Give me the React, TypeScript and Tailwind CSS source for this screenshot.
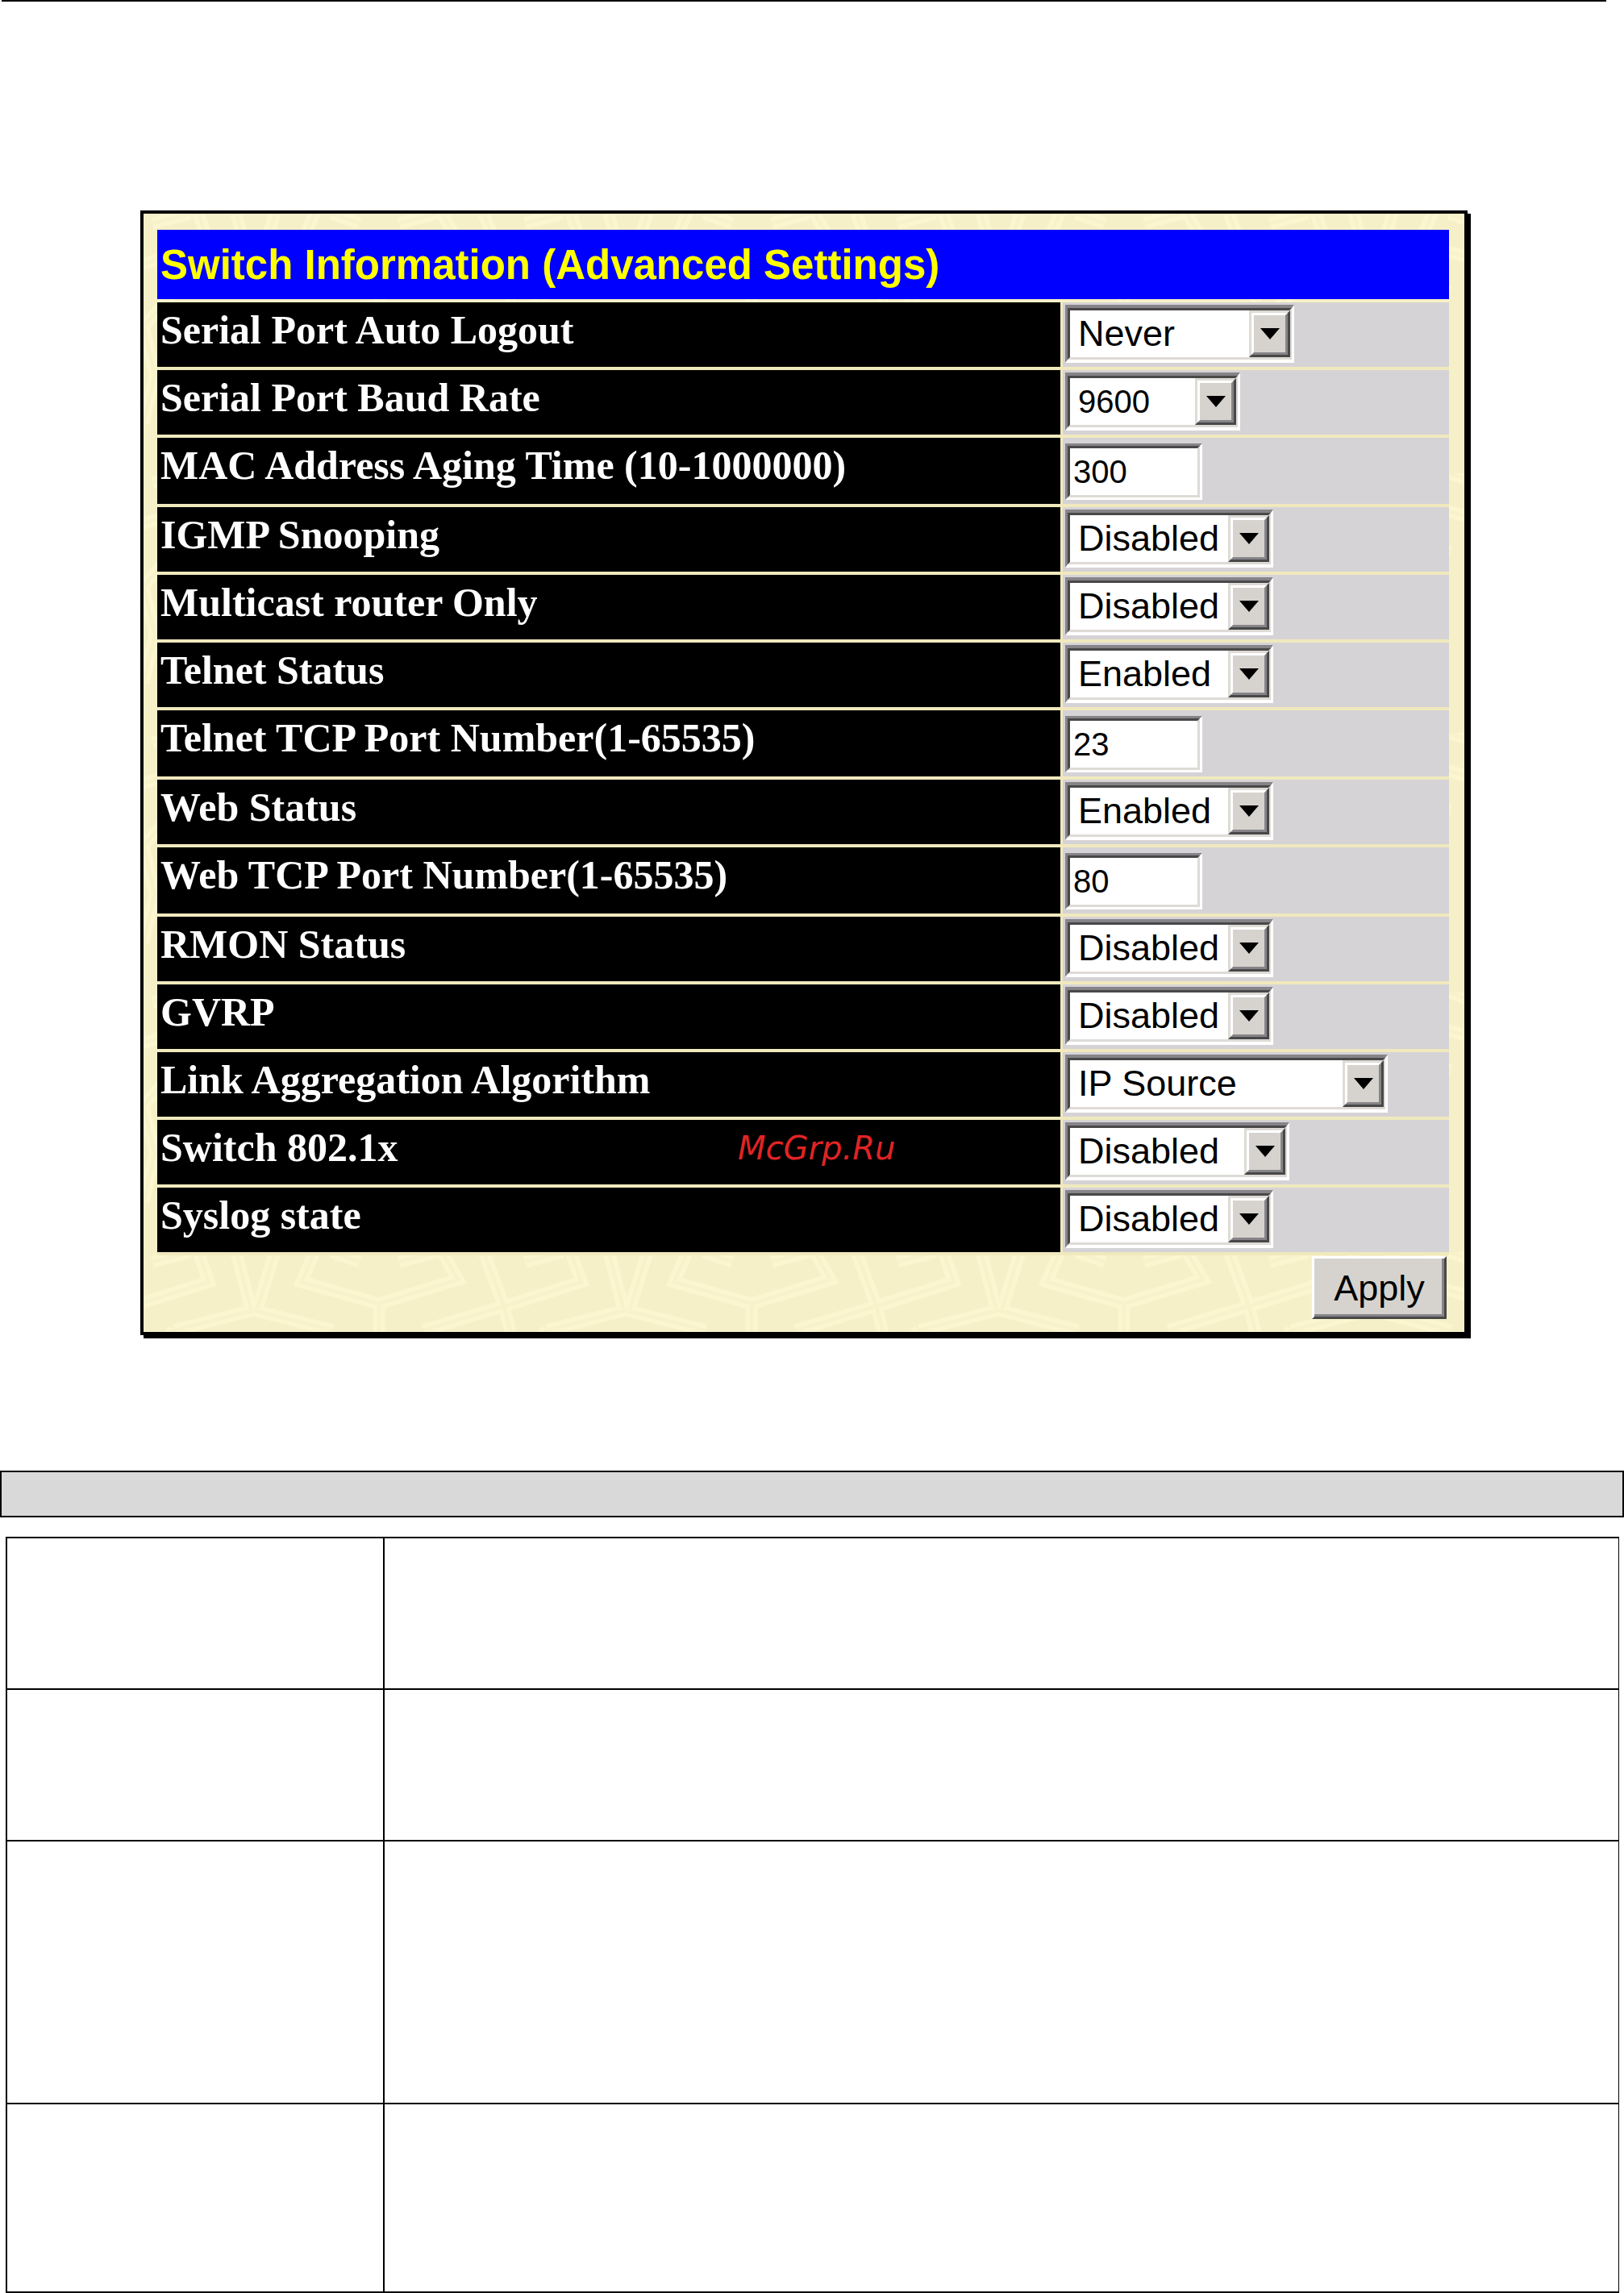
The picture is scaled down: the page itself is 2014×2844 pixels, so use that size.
import React from 'react';

interface Setting {
  id: string;
  label: string;
  type: 'select' | 'text';
  value: string;
  width: string;
  options?: string[];
}

const toggle = ['Disabled', 'Enabled'];

const settings: Setting[] = [
  { id: 'auto-logout', label: 'Serial Port Auto Logout', type: 'select', value: 'Never', width: 'w-[284px] text-[45px]', options: ['Never', '2 Minutes', '5 Minutes', '10 Minutes', '15 Minutes'] },
  { id: 'baud-rate', label: 'Serial Port Baud Rate', type: 'select', value: '9600', width: 'w-[217px] text-[40px]', options: ['9600', '19200', '38400', '115200'] },
  { id: 'aging-time', label: 'MAC Address Aging Time (10-1000000)', type: 'text', value: '300', width: 'w-[170px]' },
  { id: 'igmp', label: 'IGMP Snooping', type: 'select', value: 'Disabled', width: 'w-[258px] text-[45px]', options: toggle },
  { id: 'multicast', label: 'Multicast router Only', type: 'select', value: 'Disabled', width: 'w-[258px] text-[45px]', options: toggle },
  { id: 'telnet', label: 'Telnet Status', type: 'select', value: 'Enabled', width: 'w-[258px] text-[45px]', options: toggle },
  { id: 'telnet-port', label: 'Telnet TCP Port Number(1-65535)', type: 'text', value: '23', width: 'w-[170px]' },
  { id: 'web', label: 'Web Status', type: 'select', value: 'Enabled', width: 'w-[258px] text-[45px]', options: toggle },
  { id: 'web-port', label: 'Web TCP Port Number(1-65535)', type: 'text', value: '80', width: 'w-[170px]' },
  { id: 'rmon', label: 'RMON Status', type: 'select', value: 'Disabled', width: 'w-[258px] text-[45px]', options: toggle },
  { id: 'gvrp', label: 'GVRP', type: 'select', value: 'Disabled', width: 'w-[258px] text-[45px]', options: toggle },
  { id: 'link-aggregation', label: 'Link Aggregation Algorithm', type: 'select', value: 'IP Source', width: 'w-[400px] text-[45px]', options: ['IP Source', 'IP Destination', 'MAC Source'] },
  { id: 'dot1x', label: 'Switch 802.1x', type: 'select', value: 'Disabled', width: 'w-[278px] text-[45px]', options: toggle },
  { id: 'syslog', label: 'Syslog state', type: 'select', value: 'Disabled', width: 'w-[258px] text-[45px]', options: toggle },
];

// one period of the embossed line work behind the form
const tileLines =
  'M212 -20V0L196 37L292 64L390 34L370 0V-20 M292 64V120 ' +
  'M422 0L447 67L460 120 M347 97L447 67L543 37L530 0 M-15 67L81 37L68 0 ' +
  'M38 97L136 72L235 97 M115 0L133 70 M163 0L141 70 ' +
  'M317 12L363 0 M11 12L58 0 M268 12L233 0 ' +
  'M38 97L0 140L14 200L0 260 M448 140L440 200L462 260';

const PanelPattern = () => (
  <svg className="absolute inset-0 h-full w-full" aria-hidden="true">
    <defs>
      <pattern id="panel-tile" width="462" height="322" patternUnits="userSpaceOnUse">
        <path d={tileLines} fill="none" stroke="#fcf6d0" strokeWidth="15" />
        <path d={tileLines} fill="none" stroke="#f8f2ca" strokeWidth="4" />
      </pattern>
    </defs>
    <rect width="100%" height="100%" fill="url(#panel-tile)" />
  </svg>
);

const SelectBox = ({ setting }: { setting: Setting }) => (
  <div className={`relative h-[72px] border-x-[3px] border-y-4 border-t-[#868488] border-r-white border-b-white border-l-[#868488] ${setting.width}`}>
    <select
      id={setting.id}
      defaultValue={setting.value}
      className="block h-full w-full appearance-none rounded-none border-[3px] border-t-[#484848] border-r-[#dedbd6] border-b-[#dedbd6] border-l-[#484848] bg-white pl-[10px] leading-[56px] text-black outline-none"
    >
      {setting.options?.map(option => (
        <option key={option}>{option}</option>
      ))}
    </select>
    <span className="pointer-events-none absolute top-[3px] right-[2px] bottom-[3px] flex w-[51px] border-[3px] border-t-[#dedbd6] border-r-[#484848] border-b-[#484848] border-l-[#dedbd6]">
      <span className="flex flex-1 items-center justify-center border-[3px] border-t-white border-r-[#868488] border-b-[#868488] border-l-white bg-[#d6d3ce]">
        <svg width="24" height="14" viewBox="0 0 24 14" aria-hidden="true">
          <path d="M0 0H24L12 14Z" fill="#000" />
        </svg>
      </span>
    </span>
  </div>
);

const TextBox = ({ setting }: { setting: Setting }) => (
  <div className={`h-[70px] border-[3px] border-t-[#868488] border-r-white border-b-white border-l-[#868488] ${setting.width}`}>
    <input
      id={setting.id}
      type="text"
      defaultValue={setting.value}
      className="block h-full w-full rounded-none border-[3px] border-t-[#484848] border-r-[#dedbd6] border-b-[#dedbd6] border-l-[#484848] bg-white pl-1 text-[40px] text-black outline-none"
    />
  </div>
);

const SettingsPanel = () => (
  <form
    onSubmit={event => event.preventDefault()}
    className="relative mr-[194px] ml-[174px] border-4 border-black bg-[#f6f0c8] pt-5 pr-[19px] pb-4 pl-[17px] shadow-[4px_4px_0_#000]"
  >
    <PanelPattern />
    <div className="relative">
      <div className="flex h-[86px] items-center bg-[#0000ff] pl-1">
        <h1 className="text-[51px] leading-none font-bold text-[#ffff00]">Switch Information (Advanced Settings)</h1>
      </div>
      <table className="mt-1 w-full table-fixed border-separate border-spacing-0">
        <colgroup>
          <col />
          <col className="w-[479px]" />
        </colgroup>
        <tbody>
          {settings.map(setting => (
            <tr key={setting.id}>
              <th scope="row" className="border-r-[3px] border-b-4 border-[#f0e9bd] bg-black p-0 pl-1 text-left align-top font-['Liberation_Serif',serif] text-[50px] leading-[69px] font-bold text-white">
                <label htmlFor={setting.id} className="block">{setting.label}</label>
              </th>
              <td className={`border-b-4 border-[#f0e9bd] bg-[#d6d3d6] p-0 pl-[3px] align-top ${setting.type === 'text' ? 'h-[86px] pt-[7px]' : 'h-[84px] pt-[3px]'}`}>
                {setting.type === 'text' ? <TextBox setting={setting} /> : <SelectBox setting={setting} />}
              </td>
            </tr>
          ))}
        </tbody>
      </table>
      <div className="mt-px mr-[3px] flex justify-end">
        <button
          type="submit"
          className="h-[78px] w-[167px] border-[3px] border-t-white border-r-[#484848] border-b-[#484848] border-l-white bg-[#d6d3ce] text-[45px] leading-none text-black shadow-[inset_-3px_-3px_0_#868488]"
        >
          Apply
        </button>
      </div>
    </div>
    <span className="pointer-events-none absolute top-[1135px] left-[45%] font-['DejaVu_Sans',sans-serif] text-[40px] leading-[48px] text-[#e02424] italic">
      McGrp.Ru
    </span>
  </form>
);

const rowHeights = ['h-[188px]', 'h-[188px]', 'h-[326px]', 'h-[234px]'];

const DescriptionTable = () => (
  <table className="mt-6 mr-[6px] ml-[7px] w-[calc(100%-13px)] table-fixed border-separate border-spacing-0 border-t-2 border-r border-l-2 border-black">
    <colgroup>
      <col className="w-[468px]" />
      <col />
    </colgroup>
    <tbody>
      {rowHeights.map((height, index) => (
        <tr key={index} className={height}>
          <td className="border-r-2 border-b-2 border-black" />
          <td className="border-b-2 border-black" />
        </tr>
      ))}
    </tbody>
  </table>
);

export default function App() {
  return (
    <main className="bg-white font-['Liberation_Sans',Arial,sans-serif]">
      <hr className="mr-[22px] mb-[259px] ml-[2px] border-t-2 border-black" />
      <SettingsPanel />
      <div className="mt-[168px] h-[58px] border-2 border-black bg-[#d9d9d9]" />
      <DescriptionTable />
    </main>
  );
}
